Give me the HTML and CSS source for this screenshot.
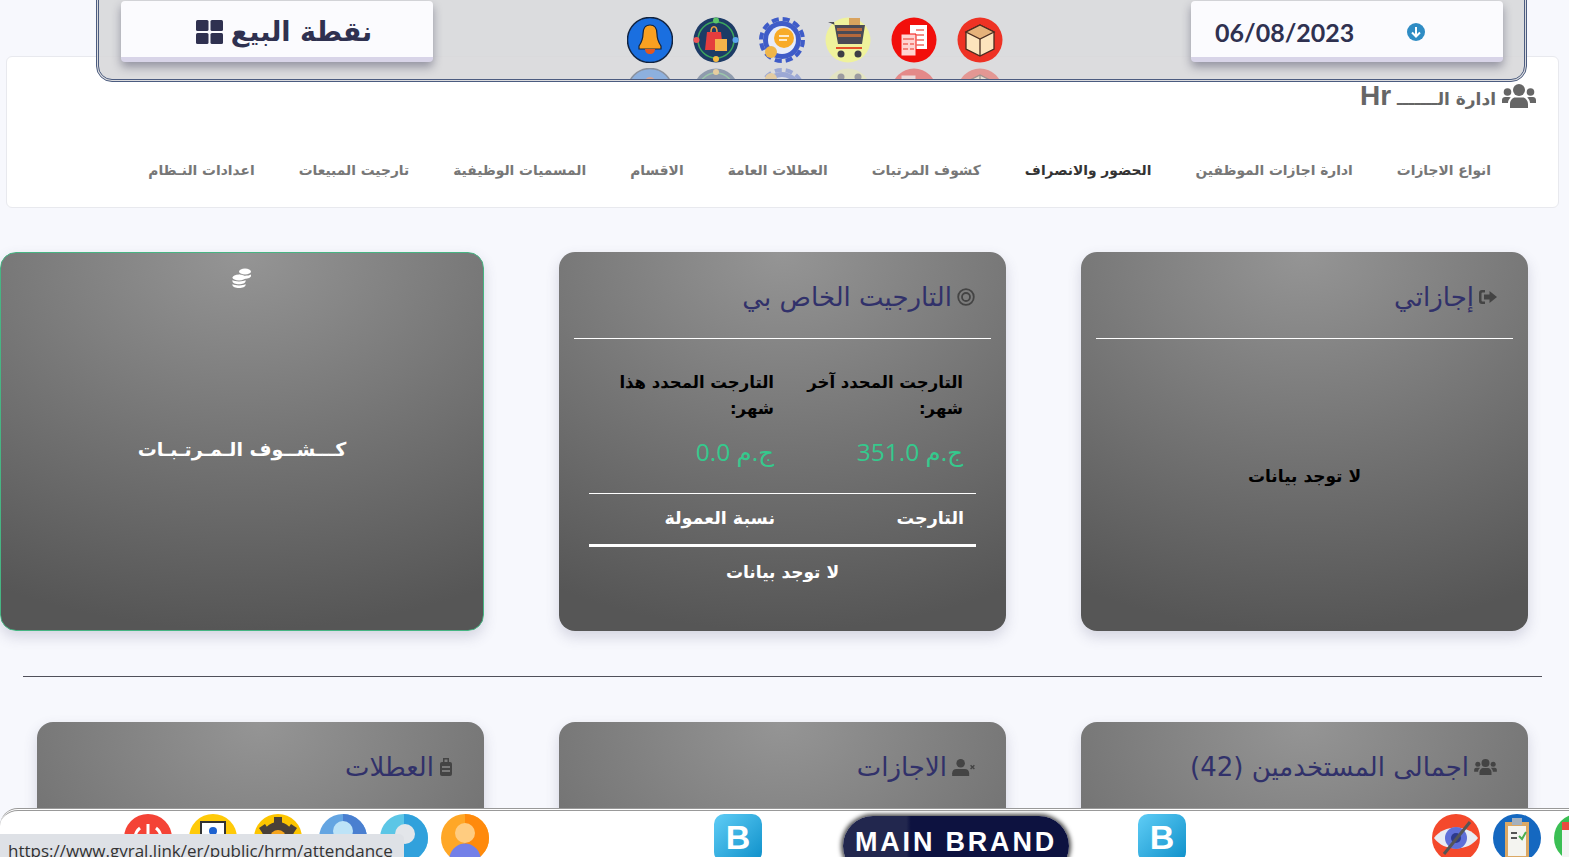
FILE: index.html
```html
<!DOCTYPE html>
<html lang="ar">
<head>
    <meta charset="UTF-8">
    <title>HRM</title>
    <link rel="stylesheet" href="styles.css">
</head>
<body>
    <svg class="defs" width="0" height="0">
        <symbol id="ic-bell" viewBox="0 0 46 46">
            <circle cx="23" cy="23" r="22.5" fill="#1a6fe0" stroke="#12233f" stroke-width="1.5"/>
            <path d="M23 8c5 0 7 4 7 9 0 6 2 9 4 12v3H12v-3c2-3 4-6 4-12 0-5 2-9 7-9z" fill="#f9a020" stroke="#12233f" stroke-width="1.2"/>
            <path d="M18 32h10c0 3-2 5-5 5s-5-2-5-5z" fill="#e2571e"/>
        </symbol>
        <symbol id="ic-bag" viewBox="0 0 46 46">
            <circle cx="23" cy="23" r="22.5" fill="#1d3b66"/>
            <circle cx="23" cy="23" r="18" fill="none" stroke="#3ba55d" stroke-width="1.5"/>
            <path d="M14 15h14l2 18H12z" fill="#e53d3d"/>
            <path d="M18 15c0-7 6-7 6 0" fill="none" stroke="#f0a040" stroke-width="1.5"/>
            <path d="M22 22h12v12H22z" fill="#f6b24a"/>
            <circle cx="23" cy="3.500" r="3" fill="#5cc46a"/>
            <circle cx="3.500" cy="23" r="3" fill="#e55"/>
            <circle cx="42.500" cy="23" r="3" fill="#59a6ee"/>
            <circle cx="23" cy="42" r="3" fill="#f5b942"/>
        </symbol>
        <symbol id="ic-gear" viewBox="0 0 46 46">
            <circle cx="23" cy="23" r="19" fill="#3f5cc8"/>
            <circle cx="23" cy="23" r="21" fill="none" stroke="#3f5cc8" stroke-width="4" stroke-dasharray="7 4"/>
            <circle cx="23" cy="23" r="14" fill="#e8edf9"/>
            <circle cx="25" cy="21" r="10" fill="#f8ab28"/>
            <path d="M20 19h10M20 23h8" stroke="#fff" stroke-width="1.500"/>
            <circle cx="12" cy="35" r="6" fill="#f0b64a"/>
        </symbol>
        <symbol id="ic-cart" viewBox="0 0 46 46">
            <circle cx="23" cy="23" r="22.500" fill="#eff29c"/>
            <path d="M3 5h6l4 22h24l3-19H10" fill="#4a4a55"/>
            <path d="M12 11h25v3H12zM13 17h23v3H13z" fill="#b5683c"/>
            <path d="M24 1h11v7H24z" fill="#d9a35e"/>
            <path d="M11 30h26v2H11z" fill="#e2522b"/>
            <circle cx="16" cy="37" r="3.500" fill="#3d3d46"/>
            <circle cx="33" cy="37" r="3.500" fill="#3d3d46"/>
        </symbol>
        <symbol id="ic-docs" viewBox="0 0 46 46">
            <circle cx="23" cy="23" r="22.500" fill="#f20f0b"/>
            <path d="M19 8h17v24H19z" fill="#fff"/>
            <path d="M10 17h15v22H10z" fill="#ffd5d2" stroke="#f20f0b"/>
            <path d="M25 13h8M25 18h8M25 23h8M25 28h8M12 22h11M12 27h5M12 32h5M19 27h4M19 32h4" stroke="#f0695f" stroke-width="1.500"/>
        </symbol>
        <symbol id="ic-box" viewBox="0 0 46 46">
            <circle cx="23" cy="23" r="22.500" fill="#ee3224"/>
            <path d="M23 8l14 7v17l-14 7-14-7V15z" fill="#fde4bc" stroke="#4a2c20" stroke-width="1.300"/>
            <path d="M23 8l14 7-14 7-14-7z" fill="#e6b27a" stroke="#4a2c20" stroke-width="1.300"/>
            <path d="M23 22v17" fill="none" stroke="#4a2c20" stroke-width="1.300"/>
        </symbol>
        <symbol id="ic-users" viewBox="0 0 34 24">
            <circle cx="17" cy="6" r="6"/>
            <circle cx="5.500" cy="8" r="3.800"/>
            <circle cx="28.500" cy="8" r="3.800"/>
            <path d="M8 24v-4c0-4 3-6.500 5-6.500h8c2 0 5 2.500 5 6.500v4z"/>
            <path d="M0 19v-3c0-2 1.500-3 3-3h4c.7 0 1.300.2 1.800.6C7 15 6 17 6 19zM34 19v-3c0-2-1.500-3-3-3h-4c-.7 0-1.300.2-1.800.6C27 15 28 17 28 19z"/>
        </symbol>
        <symbol id="ic-out" viewBox="0 0 18 14">
            <path d="M6 0H3a3 3 0 0 0-3 3v8a3 3 0 0 0 3 3h3v-2.500H3.500a1 1 0 0 1-1-1V3.500a1 1 0 0 1 1-1H6z"/>
            <path d="M10.500 1L18 7l-7.500 6V9.500H5v-5h5.500z"/>
        </symbol>
        <symbol id="ic-target" viewBox="0 0 18 18">
            <circle cx="9" cy="9" r="7.800" fill="none" stroke="currentColor" stroke-width="1.800"/>
            <circle cx="9" cy="9" r="4" fill="none" stroke="currentColor" stroke-width="1.800"/>
        </symbol>
        <symbol id="ic-user-x" viewBox="0 0 24 18">
            <circle cx="9" cy="4.500" r="4.500"/>
            <path d="M0 18v-3c0-3 2-4.500 4.500-4.500h9C16 10.500 18 12 18 15v3z"/>
            <path d="M19.500 6.500l4 4M23.500 6.500l-4 4" stroke="currentColor" stroke-width="1.500"/>
        </symbol>
        <symbol id="ic-case" viewBox="0 0 14 20">
            <path d="M4 5V1h6v4H8.500V2.500h-3V5z"/>
            <rect x="1" y="5" width="12" height="14" rx="2"/>
            <path d="M3 10h8M3 14h8" stroke="#8a8a8a" stroke-width="1.500"/>
        </symbol>
        <symbol id="ic-coins" viewBox="0 0 20 20">
            <ellipse cx="13" cy="3.500" rx="6" ry="3"/>
            <path d="M7 6.500c1.500 1 3.500 1.200 6 1.200s4.500-.4 6-1.200v1.500c0 1.500-3 2.700-6 2.700s-6-1.200-6-2.700z"/>
            <ellipse cx="7" cy="9.500" rx="6.500" ry="3"/>
            <path d="M.5 12c1.500 1 3.500 1.400 6.500 1.400s5-.4 6.500-1.400v1.500c0 1.500-3 2.700-6.500 2.700S.5 15 .5 13.500z"/>
            <path d="M.5 16c1.500 1 3.500 1.400 6.500 1.400s5-.4 6.500-1.400v1.300c0 1.500-3 2.700-6.500 2.700S.5 18.800.5 17.300z"/>
        </symbol>
        <symbol id="ic-grid" viewBox="0 0 27 24">
            <rect width="12.500" height="11" rx="1.500"/>
            <rect x="14.500" width="12.500" height="11" rx="1.500"/>
            <rect y="13" width="12.500" height="11" rx="1.500"/>
            <rect x="14.500" y="13" width="12.500" height="11" rx="1.500"/>
        </symbol>
    </svg>

    <header class="topbar">
        <div class="pos-box">
            <svg class="pos-icon"><use href="#ic-grid"/></svg>
            <span>نقطة البيع</span>
        </div>
        <div class="quick-icons">
            <div class="quick"><svg><use href="#ic-box"/></svg><svg class="mirror"><use href="#ic-box"/></svg></div>
            <div class="quick"><svg><use href="#ic-docs"/></svg><svg class="mirror"><use href="#ic-docs"/></svg></div>
            <div class="quick"><svg><use href="#ic-cart"/></svg><svg class="mirror"><use href="#ic-cart"/></svg></div>
            <div class="quick"><svg><use href="#ic-gear"/></svg><svg class="mirror"><use href="#ic-gear"/></svg></div>
            <div class="quick"><svg><use href="#ic-bag"/></svg><svg class="mirror"><use href="#ic-bag"/></svg></div>
            <div class="quick"><svg><use href="#ic-bell"/></svg><svg class="mirror"><use href="#ic-bell"/></svg></div>
        </div>
        <div class="date-box">
            <span class="date-text">06/08/2023</span>
            <svg class="date-arrow" viewBox="0 0 18 18">
                <circle cx="9" cy="9" r="9" fill="#2f8cc4"/>
                <path d="M9 4v9M5 9.500l4 4 4-4" fill="none" stroke="#fff" stroke-width="2"/>
            </svg>
        </div>
    </header>

    <section class="panel">
        <h2 class="panel-title">
            <svg class="panel-icon"><use href="#ic-users"/></svg>
            <span>ادارة الـــــــ <b class="hr-text">Hr</b></span>
        </h2>
        <nav class="tabs">
            <a href="#">انواع الاجازات</a>
            <a href="#">ادارة اجازات الموظفين</a>
            <a href="#" class="active">الحضور والانصراف</a>
            <a href="#">كشوف المرتبات</a>
            <a href="#">العطلات العامة</a>
            <a href="#">الاقسام</a>
            <a href="#">المسميات الوظيفية</a>
            <a href="#">تارجيت المبيعات</a>
            <a href="#">اعدادات النـظام</a>
        </nav>
    </section>

    <main class="cards">
        <div class="card">
            <h3 class="card-title"><svg class="t-icon ic-out"><use href="#ic-out"/></svg>إجازاتي</h3>
            <hr class="card-line">
            <p class="empty">لا توجد بيانات</p>
        </div>

        <div class="card">
            <h3 class="card-title"><svg class="t-icon ic-target"><use href="#ic-target"/></svg>التارجيت الخاص بي</h3>
            <hr class="card-line">
            <div class="target-cols">
                <div>
                    <p class="target-label">التارجت المحدد آخر شهر:</p>
                    <p class="target-value">ج.م 351.0</p>
                </div>
                <div>
                    <p class="target-label">التارجت المحدد هذا شهر:</p>
                    <p class="target-value">ج.م 0.0</p>
                </div>
            </div>
            <div class="target-table">
                <div class="target-head">
                    <span>التارجت</span>
                    <span>نسبة العمولة</span>
                </div>
                <p class="target-empty">لا توجد بيانات</p>
            </div>
        </div>

        <div class="card card-link">
            <svg class="coins"><use href="#ic-coins"/></svg>
            <p class="card-link-text">كـــشــوف الـمـرتـبـات</p>
        </div>

        <hr class="divider">

        <div class="card">
            <h3 class="card-title"><svg class="t-icon ic-users-sm"><use href="#ic-users"/></svg>اجمالى المستخدمين (42)</h3>
        </div>
        <div class="card">
            <h3 class="card-title"><svg class="t-icon ic-user-x"><use href="#ic-user-x"/></svg>الاجازات</h3>
        </div>
        <div class="card">
            <h3 class="card-title"><svg class="t-icon ic-case"><use href="#ic-case"/></svg>العطلات</h3>
        </div>
    </main>

    <footer class="dock">
        <div class="dock-group">
            <svg class="dock-icon" viewBox="0 0 48 48"><circle cx="24" cy="24" r="24" fill="#f44336"/><path d="M24 10v14M16 14a13 13 0 1 0 16 0" fill="none" stroke="#fff" stroke-width="3"/></svg>
            <svg class="dock-icon" viewBox="0 0 48 48"><circle cx="24" cy="24" r="24" fill="#ffca08"/><rect x="12" y="8" width="24" height="30" fill="#fff" stroke="#333" stroke-width="2"/><circle cx="24" cy="17" r="4" fill="#1e62d0"/><path d="M17 28c0-5 14-5 14 0z" fill="#1e62d0"/></svg>
            <svg class="dock-icon" viewBox="0 0 48 48"><circle cx="24" cy="24" r="24" fill="#fdc500"/><circle cx="24" cy="24" r="16" fill="#4a4038"/><path d="M20 3h8v8h-8zM5 14l6-4 4 6-6 4zM43 14l-6-4-4 6 6 4z" fill="#4a4038"/><circle cx="24" cy="24" r="8" fill="#f6a51d"/></svg>
            <svg class="dock-icon" viewBox="0 0 48 48"><circle cx="24" cy="24" r="24" fill="#64a5e2"/><path d="M24 0a24 24 0 0 1 0 48z" fill="#4a7fd0"/><circle cx="24" cy="17" r="10" fill="#bde3f7"/><path d="M8 42c2-20 30-20 32 0z" fill="#bde3f7"/></svg>
            <svg class="dock-icon dock-tight" viewBox="0 0 48 48"><circle cx="24" cy="24" r="24" fill="#5cc6e6"/><path d="M24 0a24 24 0 0 1 0 48z" fill="#31a1dc"/><circle cx="25" cy="20" r="10" fill="#e3e6ea"/></svg>
            <svg class="dock-icon dock-tight" viewBox="0 0 48 48"><circle cx="24" cy="24" r="24" fill="#ffa726"/><path d="M24 0a24 24 0 0 1 0 48z" fill="#ff8a0c"/><circle cx="24" cy="19" r="10" fill="#ffcc80"/><path d="M8 46c2-22 30-22 32 0z" fill="#7380e8"/></svg>
        </div>
        <div class="dock-center">
            <span class="b-logo">B</span>
            <span class="brand-pill">MAIN BRAND</span>
            <span class="b-logo">B</span>
        </div>
        <div class="dock-group dock-right">
            <svg class="dock-icon" viewBox="0 0 48 48"><circle cx="24" cy="24" r="24" fill="#f4492c"/><path d="M2 24c10-14 34-14 44 0-10 14-34 14-44 0z" fill="#e8ecf4"/><circle cx="24" cy="24" r="11" fill="#5f6fd8"/><circle cx="24" cy="24" r="5" fill="#2d3a8c"/><path d="M38 8L12 40" stroke="#555" stroke-width="3"/></svg>
            <svg class="dock-icon" viewBox="0 0 48 48"><circle cx="24" cy="24" r="24" fill="#1568c0"/><rect x="12" y="8" width="24" height="36" fill="#dba864"/><rect x="15" y="12" width="18" height="30" fill="#f4f4f0"/><rect x="19" y="4" width="10" height="7" fill="#a4b0bd"/><path d="M18 19h6M18 24h6" stroke="#555" stroke-width="2"/><path d="M26 22l3 3 4-7" fill="none" stroke="#4caf50" stroke-width="2"/></svg>
            <svg class="dock-icon" viewBox="0 0 48 48"><circle cx="24" cy="24" r="24" fill="#3bbf54"/><rect x="8" y="8" width="32" height="36" fill="#f4f4f4"/><rect x="8" y="8" width="32" height="8" fill="#ea4c3f"/></svg>
        </div>
    </footer>

    <div class="status-link">https://www.gyral.link/er/public/hrm/attendance</div>
</body>
</html>
```

FILE: styles.css
```css
html, body {
    height: 100%;
}
body {
    margin: 0;
    height: 857px;
    overflow: hidden;
    position: relative;
    background: #f7f8fd;
    font-family: "DejaVu Sans", sans-serif;
}
.defs {
    position: absolute;
}

/* top bar */
.topbar {
    position: absolute;
    top: -10px;
    left: 96px;
    width: 1431px;
    height: 92px;
    box-sizing: border-box;
    padding: 8px 21px 0 22px;
    display: flex;
    justify-content: space-between;
    align-items: flex-start;
    background: rgba(215, 215, 218, 0.88);
    border: 3px double #4c5c80;
    border-radius: 0 0 16px 16px;
    z-index: 5;
}
.date-box, .pos-box {
    width: 312px;
    height: 61px;
    box-sizing: border-box;
    padding-top: 5px;
    background: #fbfbfe;
    border-bottom: 5px solid #d8d4e8;
    border-radius: 4px;
    box-shadow: 0 5px 10px rgba(40, 40, 70, 0.4);
    color: #2f3150;
    display: flex;
    align-items: center;
}
.date-box {
    padding-left: 24px;
    padding-right: 78px;
    justify-content: space-between;
}
.date-text {
    font: 700 25px "Lato", sans-serif;
}
.date-arrow {
    width: 18px;
    height: 18px;
}
.pos-box {
    justify-content: center;
    gap: 8px;
    padding-left: 14px;
    font-size: 27px;
    font-weight: 700;
}
.pos-icon {
    width: 27px;
    height: 24px;
    fill: #2f3150;
}
.quick-icons {
    display: flex;
    flex-direction: row-reverse;
    gap: 20px;
    margin: 16px 0 0 6px;
}
.quick {
    width: 46px;
    height: 62px;
    overflow: hidden;
}
.quick svg {
    display: block;
    width: 46px;
    height: 46px;
}
.quick .mirror {
    margin-top: 5px;
    transform: scaleY(-1);
    opacity: 0.4;
}

/* panel */
.panel {
    margin: 56px 10px 0 6px;
    height: 152px;
    box-sizing: border-box;
    background: #fff;
    border: 1px solid #e8e9ee;
    border-radius: 6px;
    direction: rtl;
}
.panel-title {
    margin: 0;
    height: 50px;
    box-sizing: border-box;
    padding: 27px 22px 0 0;
    display: flex;
    align-items: center;
    gap: 6px;
    color: #666;
    font-size: 17px;
    font-weight: 700;
}
.hr-text {
    font: 700 28px "Liberation Sans", sans-serif;
}
.panel-icon {
    width: 34px;
    height: 24px;
    fill: #666;
}
.tabs {
    display: flex;
    gap: 44px;
    padding: 55px 67px 0 0;
}
.tabs a {
    color: #777;
    font-size: 13.800px;
    font-weight: 700;
    text-decoration: none;
    white-space: nowrap;
}
.tabs a.active {
    color: #333;
}

/* cards */
.cards {
    display: grid;
    grid-template-columns: repeat(3, 447px);
    column-gap: 75px;
    direction: rtl;
    padding: 44px 41px 0 37px;
}
.card {
    height: 379px;
    box-sizing: border-box;
    padding: 0 15px;
    border-radius: 16px;
    background: radial-gradient(ellipse 110% 100% at 50% 0, #959595 0%, #757575 50%, #565656 100%);
    box-shadow: 0 6px 14px rgba(70, 70, 110, 0.2);
    color: #000;
}
.card-link {
    margin-left: -37px;
    border: 1px solid #46b583;
    padding: 0;
    display: flex;
    flex-direction: column;
    align-items: center;
}
.card-title {
    margin: 0;
    height: 86px;
    padding: 4px 16px 0 0;
    box-sizing: border-box;
    display: flex;
    align-items: center;
    gap: 5px;
    color: #31316a;
    font-size: 26px;
    font-weight: 400;
    white-space: nowrap;
}
.t-icon {
    color: #444;
    fill: #444;
}
.ic-out {
    width: 18px;
    height: 14px;
}
.ic-target {
    width: 18px;
    height: 18px;
}
.ic-users-sm {
    width: 23px;
    height: 16px;
}
.ic-user-x {
    width: 23px;
    height: 17px;
}
.ic-case {
    width: 14px;
    height: 20px;
}
.card-line {
    margin: 0;
    border: 0;
    border-top: 1px solid #fff;
}
.empty {
    margin: 127px 0 0;
    text-align: center;
    font-size: 17px;
    font-weight: 700;
}
.coins {
    width: 20px;
    height: 20px;
    fill: #fff;
    margin-top: 15px;
}
.card-link-text {
    margin: 150px 0 0;
    color: #fff;
    font-size: 19px;
    font-weight: 700;
}

.target-cols {
    display: grid;
    grid-template-columns: 189px 189px;
    justify-content: start;
    padding: 31px 28px 0 0;
}
.target-label {
    margin: 0;
    font-size: 16.500px;
    font-weight: 700;
    line-height: 26px;
    width: 178px;
}
.target-value {
    margin: 13px 0 0;
    color: #35c98d;
    font: 500 24.500px/34px "Open Sans", "DejaVu Sans", sans-serif;
}
.target-table {
    margin: 24px 15px 0;
    border-top: 1px solid #fff;
    color: #fff;
    font-weight: 700;
}
.target-head {
    display: grid;
    grid-template-columns: 189px 1fr;
    padding: 11px 12px 12px 0;
    border-bottom: 3px solid #fff;
    font-size: 17.500px;
    line-height: 27px;
}
.target-empty {
    margin: 15px 0 0;
    text-align: center;
    font-size: 17px;
}

.divider {
    grid-column: 1 / -1;
    margin: 45px -14px 45px -14px;
    border: 0;
    border-top: 1px solid #50505a;
}

/* bottom dock */
.dock {
    position: absolute;
    left: 0;
    right: 0;
    bottom: 0;
    height: 49px;
    box-sizing: border-box;
    border-top: 3px double #999;
    border-radius: 18px 0 0 0;
    background: #fff;
    overflow: hidden;
    z-index: 6;
}
.dock-group {
    position: absolute;
    top: 3px;
    left: 124px;
    display: flex;
    gap: 17px;
}
.dock-right {
    left: 1432px;
    gap: 13px;
}
.dock-icon {
    width: 48px;
    height: 48px;
    flex: none;
}
.dock-tight {
    margin-left: -4px;
}
.dock-center {
    position: absolute;
    top: 3px;
    left: 714px;
    display: flex;
    align-items: flex-start;
}
.b-logo {
    width: 48px;
    height: 48px;
    border-radius: 10px;
    background: linear-gradient(135deg, #5fcdf6, #0d8fc9);
    color: #fff;
    font: 700 34px/46px "Liberation Sans", sans-serif;
    text-align: center;
}
.brand-pill {
    margin: 2px 69px 0 81px;
    width: 226px;
    height: 60px;
    box-sizing: border-box;
    border-radius: 30px;
    background: linear-gradient(90deg, #22274e 0, #22274e 28%, #0d1240 30%);
    box-shadow: 0 0 4px 2px rgba(0, 0, 0, 0.7);
    color: #fff;
    font: 700 27px/52px "Liberation Sans", sans-serif;
    letter-spacing: 2.800px;
    text-align: center;
}
.status-link {
    position: absolute;
    left: 0;
    bottom: 0;
    width: 404px;
    height: 23px;
    box-sizing: border-box;
    padding: 6px 0 0 8px;
    background: #dee1e6;
    border-radius: 0 5px 0 0;
    color: #333;
    font: 400 17px/22px "Open Sans", sans-serif;
    white-space: nowrap;
    overflow: hidden;
    z-index: 7;
}
```
